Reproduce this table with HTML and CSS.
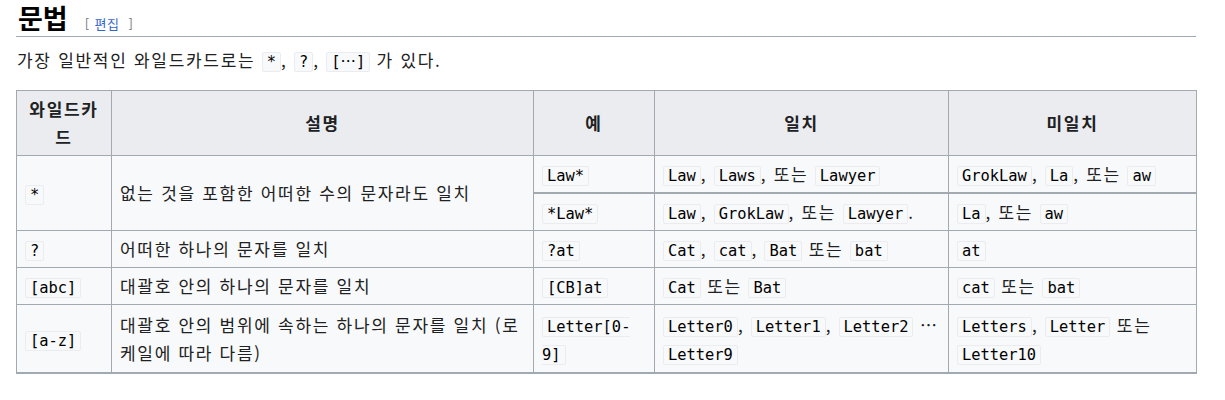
FILE: index.html
```html
<!DOCTYPE html>
<html lang="ko">
<head>
<meta charset="utf-8">
<link rel="stylesheet" href="styles.css">
</head>
<body>
<div class="content">
  <h2 class="heading"><span class="title">문법</span><span class="edit"><span class="br">[</span><a class="edit-link">편집</a><span class="br">]</span></span></h2>
  <p class="intro">가장 일반적인 와일드카드로는 <code>*</code>, <code>?</code>, <code>[<span class="cjk">⋯</span>]</code> 가 있다.</p>
  <table class="wikitable">
    <colgroup>
      <col class="c1"><col class="c2"><col class="c3"><col class="c4"><col class="c5">
    </colgroup>
    <thead>
      <tr><th class="th-wc">와일드카드</th><th>설명</th><th>예</th><th>일치</th><th>미일치</th></tr>
    </thead>
    <tbody>
      <tr>
        <td rowspan="2"><code>*</code></td>
        <td rowspan="2">없는 것을 포함한 어떠한 수의 문자라도 일치</td>
        <td><code>Law*</code></td>
        <td><code>Law</code>, <code>Laws</code>, 또는 <code>Lawyer</code></td>
        <td><code>GrokLaw</code>, <code>La</code>, 또는 <code>aw</code></td>
      </tr>
      <tr class="sub">
        <td><code>*Law*</code></td>
        <td><code>Law</code>, <code>GrokLaw</code>, 또는 <code>Lawyer</code>.</td>
        <td><code>La</code>, 또는 <code>aw</code></td>
      </tr>
      <tr>
        <td><code>?</code></td>
        <td>어떠한 하나의 문자를 일치</td>
        <td><code>?at</code></td>
        <td><code>Cat</code>, <code>cat</code>, <code>Bat</code> 또는 <code>bat</code></td>
        <td><code>at</code></td>
      </tr>
      <tr>
        <td><code>[abc]</code></td>
        <td>대괄호 안의 하나의 문자를 일치</td>
        <td><code>[CB]at</code></td>
        <td><code>Cat</code> 또는 <code>Bat</code></td>
        <td><code>cat</code> 또는 <code>bat</code></td>
      </tr>
      <tr class="last">
        <td><code>[a-z]</code></td>
        <td>대괄호 안의 범위에 속하는 하나의 문자를 일치 (로케일에 따라 다름)</td>
        <td><code>Letter[0-9]</code></td>
        <td><code>Letter0</code>, <code>Letter1</code>, <code>Letter2</code> … <code>Letter9</code></td>
        <td><code>Letters</code>, <code>Letter</code> 또는 <code>Letter10</code></td>
      </tr>
    </tbody>
  </table>
</div>
</body>
</html>
```

FILE: styles.css
```css
* { box-sizing: border-box; }
html, body { margin: 0; padding: 0; background: #fff; }
body {
  font-family: "Noto Sans CJK KR", "Noto Sans", sans-serif;
  color: #202122;
}
.content {
  margin-left: 16px;
  width: 1180px;
}
.heading {
  margin: 0;
  padding-top: 2px;
  height: 37px;
  line-height: 32px;
  border-bottom: 1px solid #a2a9b1;
  display: flex;
  align-items: baseline;
}
.title {
  font-size: 27px;
  font-weight: 700;
  color: #000;
  padding-left: 2px;
}
.edit {
  font-size: 13px;
  font-weight: 400;
  margin-left: 17px;
  letter-spacing: 0.5px;
}
.edit .br { color: #72777d; }
.edit-link { color: #3366cc; margin: 0 9px 0 5px; }
.intro {
  margin: 10px 0 0 1px;
  font-size: 17px;
  line-height: 26px;
  letter-spacing: 1.7px;
}
code {
  font-family: "DejaVu Sans Mono", monospace;
  font-size: 15.4px;
  line-height: 1;
  letter-spacing: 0;
  background: #f8f9fa;
  border: 1px solid #eaecf0;
  border-radius: 2px;
  padding: 0 4px;
  color: #000;
}
code .cjk { font-family: "Noto Sans CJK KR", sans-serif; }
.wikitable {
  margin-top: 17px;
  width: 1180px;
  table-layout: fixed;
  border-collapse: collapse;
  background: #f8f9fa;
  border: 1px solid #a2a9b1;
  border-bottom-width: 2px;
  font-size: 17px;
  line-height: 28px;
  letter-spacing: 1.7px;
}
.c1 { width: 95px; }
.c2 { width: 422px; }
.c3 { width: 121px; }
.c4 { width: 294px; }
.c5 { width: 248px; }
.wikitable th, .wikitable td {
  border: 1px solid #a2a9b1;
  padding: 4px 8px;
  vertical-align: middle;
}
.wikitable th {
  background: #eaecf0;
  text-align: center;
  font-weight: 700;
}
.wikitable td { text-align: left; }
.wikitable tr.sub td { border-top-width: 2px; }
.wikitable tr.last td { padding: 6px 8px 5px; }
```
